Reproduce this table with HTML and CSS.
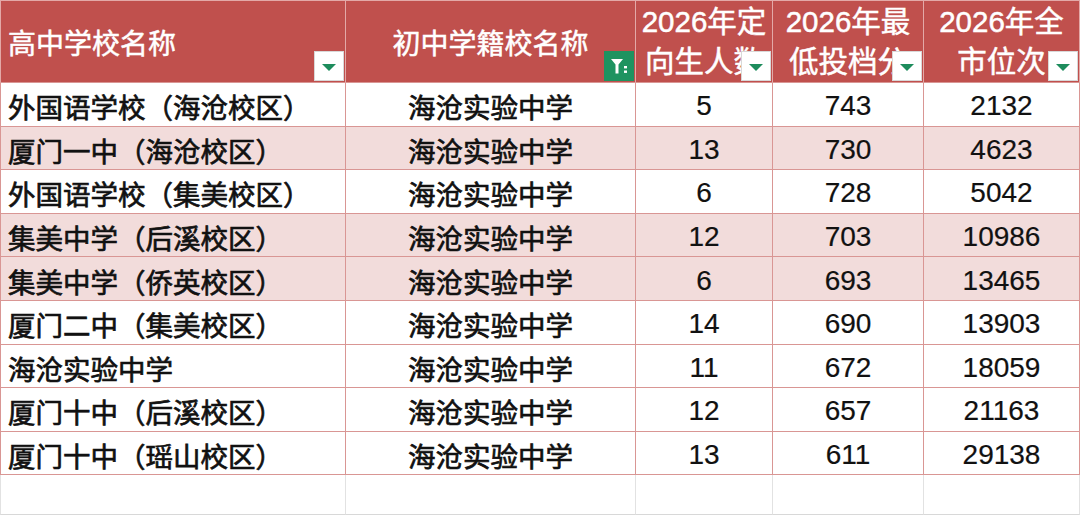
FILE: index.html
```html
<!DOCTYPE html>
<html lang="zh">
<head>
<meta charset="utf-8">
<link rel="stylesheet" href="styles.css">
</head>
<body>
<div class="sheet">
  <div class="hc left"><span class="ht">高中学校名称</span><span class="fb"><i class="tri"></i></span></div>
  <div class="hc"><span class="ht">初中学籍校名称</span><span class="fb on"><svg width="22" height="22" viewBox="0 0 22 22"><path d="M3 4h12l-4.5 5.5v9h-3v-9z" fill="#fff"/><rect x="16" y="11" width="3" height="2.4" fill="#fff"/><rect x="16" y="15.5" width="3" height="2.4" fill="#fff"/></svg></span></div>
  <div class="hc two"><span class="ht">2026年定<br>向生人数</span><span class="fb"><i class="tri"></i></span></div>
  <div class="hc two"><span class="ht">2026年最<br>低投档分</span><span class="fb"><i class="tri"></i></span></div>
  <div class="hc two"><span class="ht">2026年全<br>市位次</span><span class="fb"><i class="tri"></i></span></div>

  <div class="c left">外国语学校（海沧校区）</div><div class="c">海沧实验中学</div><div class="c n">5</div><div class="c n">743</div><div class="c n">2132</div>
  <div class="c left p">厦门一中（海沧校区）</div><div class="c p">海沧实验中学</div><div class="c n p">13</div><div class="c n p">730</div><div class="c n p">4623</div>
  <div class="c left">外国语学校（集美校区）</div><div class="c">海沧实验中学</div><div class="c n">6</div><div class="c n">728</div><div class="c n">5042</div>
  <div class="c left p">集美中学（后溪校区）</div><div class="c p">海沧实验中学</div><div class="c n p">12</div><div class="c n p">703</div><div class="c n p">10986</div>
  <div class="c left p">集美中学（侨英校区）</div><div class="c p">海沧实验中学</div><div class="c n p">6</div><div class="c n p">693</div><div class="c n p">13465</div>
  <div class="c left">厦门二中（集美校区）</div><div class="c">海沧实验中学</div><div class="c n">14</div><div class="c n">690</div><div class="c n">13903</div>
  <div class="c left">海沧实验中学</div><div class="c">海沧实验中学</div><div class="c n">11</div><div class="c n">672</div><div class="c n">18059</div>
  <div class="c left">厦门十中（后溪校区）</div><div class="c">海沧实验中学</div><div class="c n">12</div><div class="c n">657</div><div class="c n">21163</div>
  <div class="c left">厦门十中（瑶山校区）</div><div class="c">海沧实验中学</div><div class="c n">13</div><div class="c n">611</div><div class="c n">29138</div>

  <div class="e first"></div><div class="e"></div><div class="e"></div><div class="e"></div><div class="e"></div>
</div>
</body>
</html>
```
FILE: styles.css
```css
html, body {
  margin: 0;
  padding: 0;
  background: #fff;
}
body {
  width: 1080px;
  height: 516px;
  overflow: hidden;
  font-family: "Liberation Sans", "Noto Sans CJK SC", sans-serif;
}
.sheet {
  display: grid;
  grid-template-columns: 346px 290px 137px 151px 156px;
  grid-template-rows: 83px repeat(9, 43.6px) 40px;
  width: 1080px;
}
.hc {
  position: relative;
  background: #c0504d;
  color: #fff;
  font-size: 28px;
  font-weight: 400;
  -webkit-text-stroke: 0.5px #fff;
  border-right: 1px solid #e3a9a7;
  border-bottom: 1px solid #d99694;
  border-top: 1px solid #e3a9a7;
  display: flex;
  align-items: center;
  justify-content: center;
  overflow: hidden;
  box-sizing: border-box;
}
.hc:first-child { border-left: 1px solid #e3a9a7; }
.hc.left { justify-content: flex-start; padding-left: 7px; }
.hc .ht { display: block; margin-top: 0; white-space: nowrap; }
.hc.two {
  align-items: flex-start;
  text-align: center;
  line-height: 40px;
  font-size: 29.5px;
}
.hc.two .ht {
  margin-top: 1px;
}
.fb {
  position: absolute;
  right: 1px;
  bottom: 1px;
  width: 30px;
  height: 30px;
  background: #fff;
  border: 1px solid #d8d8d8;
  box-sizing: border-box;
  display: flex;
  align-items: center;
  justify-content: center;
  -webkit-text-stroke: 0;
}
.fb.on {
  background: #1e9360;
  border-color: #1e9360;
}
.tri {
  width: 0;
  height: 0;
  border-left: 7px solid transparent;
  border-right: 7px solid transparent;
  border-top: 7px solid #1d8c5c;
  margin-top: 2px;
}
.c {
  font-size: 27.5px;
  font-weight: 400;
  -webkit-text-stroke: 0.7px #111;
  color: #111;
  display: flex;
  align-items: center;
  justify-content: center;
  border-right: 1px solid #d99694;
  border-bottom: 1px solid #d99694;
  box-sizing: border-box;
  white-space: nowrap;
  overflow: hidden;
  padding-top: 4px;
}
.c.n { font-size: 28px; -webkit-text-stroke: 0.2px #111; }
.c.left { justify-content: flex-start; padding-left: 7px; border-left: 1px solid #d99694; }
.c.p { background: #f2dcdb; }
.e {
  border-right: 1px solid #e2e2e2;
  border-bottom: 1px solid #d8d8d8;
  box-sizing: border-box;
}
.e.first { border-left: 1px solid #e2e2e2; }
```
